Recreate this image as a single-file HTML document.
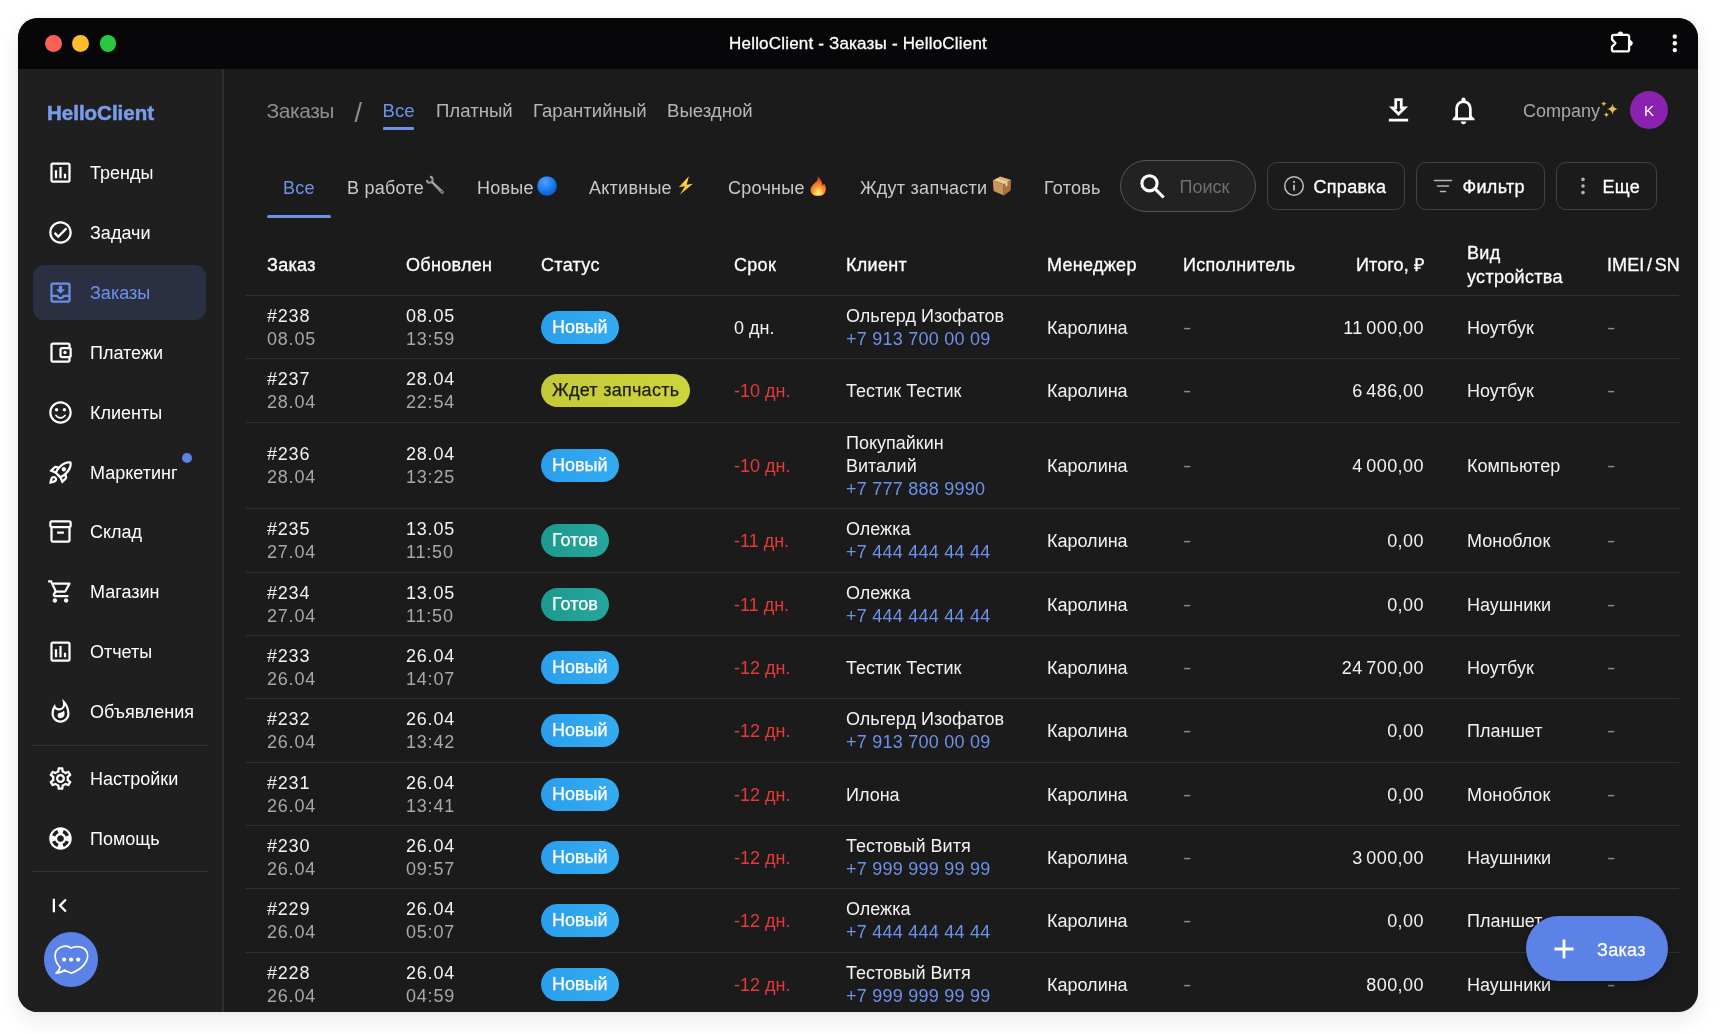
<!DOCTYPE html>
<html lang="ru"><head><meta charset="utf-8"><title>HelloClient - Заказы - HelloClient</title>
<style>
*{box-sizing:border-box;margin:0;padding:0}
html,body{width:1720px;height:1034px;overflow:hidden;background:#fff}
body{font-family:"Liberation Sans",sans-serif;color:#fff;font-size:18px}
.win{position:absolute;left:18px;top:18px;width:1680px;height:994px;border-radius:20px;overflow:hidden;background:#1b1b1b;box-shadow:0 8px 22px rgba(0,0,0,.085),0 0 2px rgba(0,0,0,.09)}
.pg{position:absolute;left:-18px;top:-18px;width:1720px;height:1034px;will-change:transform}
.pg div,.pg i{position:absolute}
svg{display:block}
.titlebar{left:18px;top:18px;width:1680px;height:51px;background:#070709}
.tl{width:16.8px;height:16.8px;border-radius:50%;top:16.9px}
.tl.r{left:27.1px;background:#fe5f57}.tl.y{left:54.2px;background:#febc2e}.tl.g{left:81.5px;background:#28c840}
.ttl{left:0;width:1680px;top:0;height:51px;line-height:51px;text-align:center;font-size:17px;letter-spacing:.19px;color:#fff;-webkit-text-stroke:.3px #fff}
.puzzle{left:1586px;top:9px}.kebab{left:1652px;top:13px}
.sidebar{left:0;top:0;width:1720px;height:1034px}
.sidebar:before{content:"";position:absolute;left:18px;top:69px;width:204px;height:943px;background:#1f1f1f;border-right:2px solid #2e2e2e}
.main{left:0;top:0;width:1720px;height:1034px}
.logo{left:47px;top:99px;font-size:20.5px;font-weight:bold;color:#7b9cea;line-height:28px;letter-spacing:0;-webkit-text-stroke:.5px #7b9cea}
.sbi{left:33px;width:173px;height:54.5px;border-radius:11px;margin-top:-1px}
.sbi.act{background:#2a3041}
.sbi .ic{position:absolute;left:13.6px;top:13.7px;width:27px;height:27px}
.sbi .lb{position:absolute;left:57px;top:0;line-height:56px;font-size:18px;white-space:nowrap}
.sbi.act .lb{color:#6d92ea}
.sbi .dot{left:149px;top:8px;width:10px;height:10px;border-radius:50%;background:#5b82e6}
.sbdiv{left:32px;width:176px;height:1px;background:#333}
.collapse{left:46px;top:891.5px}
.chat{left:43.8px;top:932px;width:54.6px;height:54.6px;border-radius:50%;background:#5b82e6}
.crumb{left:266.500px;top:96px;font-size:21px;line-height:30px;color:#8e8e8e;letter-spacing:-.45px}
.slash{left:354.500px;top:97.500px;font-size:27px;line-height:30px;color:#8e8e8e}
.tnav{top:96px;font-size:18.6px;line-height:30px;color:#b5b5b5;white-space:nowrap}
.tnav.on{color:#6d92ea}
.tnavline{left:382.500px;top:127px;width:31px;height:3px;background:#6d92ea;border-radius:1px}
.dl{left:1382px;top:93.7px}.bell{left:1447.3px;top:93.6px}
.company{left:1523px;top:96px;font-size:18px;line-height:30px;color:#a9a9a9;white-space:nowrap}
.avatar{left:1630px;top:91px;width:38px;height:38px;border-radius:50%;background:#8a22b0;text-align:center;line-height:39px;font-size:15px;color:#fff}
.tabs{left:267px;top:160px;width:833px;height:60px;overflow:hidden}
.tabs .tab{margin-left:-267px;top:12.5px;line-height:30px;font-size:18px;letter-spacing:.25px;color:#c9c9c9;white-space:nowrap}
.tabs .tab.on{color:#6d92ea}
.tabline{left:0;top:55px;width:64px;height:3px;background:#6d92ea;border-radius:1.5px}
.em{display:inline-block;width:20px;height:20px;vertical-align:-2px;margin-left:3px}
.em-wrench{margin-left:1px;vertical-align:-1px}.em-pkg{margin-left:5px}
.search{left:1120px;top:160px;width:136px;height:52px;border-radius:26px;border:1.5px solid #565656;background:#222}
.search span{position:absolute;left:58.5px;top:0;line-height:53px;font-size:18px;color:#6f6f6f}
.search svg{position:absolute;left:14.5px;top:8.5px}
.btn{top:162px;height:48px;border-radius:10px;border:1px solid #414141}
.btn span{position:absolute;left:45.5px;top:0;line-height:48px;font-size:18px;color:#fff;letter-spacing:.3px;-webkit-text-stroke:.3px #fff}
.btn svg{position:absolute;left:14px;top:10.5px}
.thead,.row{left:246px;width:1433px;border-bottom:1px solid #303030}
.thead{top:232px;height:64px;font-size:18px;letter-spacing:.3px;-webkit-text-stroke:.3px #fff}
.thead .c{top:0;height:63px;padding-top:2.6px;display:flex;align-items:center;line-height:24px;color:#fff;white-space:nowrap}
.row .c{top:0;bottom:0;padding-top:1px;display:flex;flex-direction:column;justify-content:center;line-height:23px;white-space:nowrap;color:#f2f2f2}
.row .c div{position:static}
.c1{left:21px}.c2{left:160px}.row .c1,.row .c2{letter-spacing:.8px}.row .c8{letter-spacing:.45px;word-spacing:-2px}.ph{letter-spacing:.25px}.c3{left:295px}.c4{left:488px}.c5{left:600px}.c6{left:801px}.c7{left:937px}
.c8{right:255px;text-align:right;align-items:flex-end}.c9{left:1221px}.c10{left:1361px}
.g{color:#a8a8a8}
.row .dash{color:#8a8a8a}
.row .red{color:#e5393b}
.ph{color:#6d92ea}
.st{display:inline-block;height:33px;line-height:33px;border-radius:17px;padding:0 11px;font-size:18px;color:#fff;-webkit-text-stroke:.25px currentColor}
.st-new{background:linear-gradient(90deg,#2a9eed,#34acf1)}
.st-wait{background:linear-gradient(90deg,#c3ca37,#ced43b);color:#1c1c1c;letter-spacing:.27px}
.st-done{background:linear-gradient(90deg,#1d9a8f,#26a69c)}
.fab{left:1526px;top:916px;width:142px;height:65px;border-radius:33px;background:#5b82e6;box-shadow:0 3px 9px rgba(0,0,0,.28)}
.fab span{position:absolute;left:71px;top:0;line-height:68px;font-size:18px;color:#fff;letter-spacing:.3px;-webkit-text-stroke:.25px #fff}
.fab svg{position:absolute;left:26px;top:21px}
.thead .c10{word-spacing:-2.5px}
.row .c3{padding-top:.3px}
.thead .c8,.thead .c10{letter-spacing:.1px}
.company .em{margin-left:-1.5px;width:18px;height:18px;vertical-align:-1px}
.row .c4,.row .c6,.row .c7,.row .c8,.row .c9,.row .c10,.row .one{padding-top:2.4px}
.row .dash span{display:inline-block;transform:scaleX(1.4);transform-origin:0 50%}

</style></head><body>
<div class="win"><div class="pg">
<div class="titlebar"><i class="tl r"></i><i class="tl y"></i><i class="tl g"></i>
<div class="ttl">HelloClient - Заказы - HelloClient</div>
<div class="puzzle"><svg width="34" height="30" viewBox="1604 27 34 30" fill="none" stroke="#fff" stroke-width="2.300" stroke-linejoin="round" stroke-linecap="round"><path d="M1614 34.900h13.100a2 2 0 0 1 2 2v12.500a2 2 0 0 1-2 2h-13.100a2 2 0 0 1-2-2v-2.600l3.400-3.700-3.400-3.700v-2.500a2 2 0 0 1 2-2z"/><path d="M1617.800 34.500a2.600 2.600 0 0 1 5.200 0zM1629.600 40.400a2.700 2.700 0 0 1 0 5.400z" fill="#fff" stroke-width="1"/></svg></div><div class="kebab"><svg width="10" height="24" viewBox="1670 31 10 24" fill="#fff"><circle cx="1674.800" cy="36.500" r="2.200"/><circle cx="1674.800" cy="43.300" r="2.200"/><circle cx="1674.800" cy="50.100" r="2.200"/></svg></div></div>
<div class="sidebar"><div class="logo">HelloClient</div><div class="sbi" style="top:146px"><span class="ic"><svg width="27" height="27" viewBox="0 0 24 24" fill="#fff"><path d="M9 17H7v-7h2v7zm4 0h-2V7h2v10zm4 0h-2v-4h2v4zm2 2H5V5h14v14zm0-16H5c-1.1 0-2 .9-2 2v14c0 1.1.9 2 2 2h14c1.1 0 2-.9 2-2V5c0-1.1-.9-2-2-2z"/></svg></span><span class="lb">Тренды</span></div><div class="sbi" style="top:206px"><span class="ic"><svg width="27" height="27" viewBox="0 0 24 24" fill="#fff"><path d="M12 2C6.48 2 2 6.48 2 12s4.48 10 10 10 10-4.48 10-10S17.52 2 12 2zm0 18c-4.41 0-8-3.59-8-8s3.59-8 8-8 8 3.59 8 8-3.59 8-8 8zm4.59-12.42L10 14.17l-2.59-2.58L6 13l4 4 8-8z"/></svg></span><span class="lb">Задачи</span></div><div class="sbi act" style="top:266px"><span class="ic"><svg width="27" height="27" viewBox="0 0 24 24" fill="#6c8fe6"><path d="M16 9h-2.55V6h-2.9v3H8l4 4zm3-6H4.99C3.88 3 3 3.9 3 5v14c0 1.1.88 2 1.99 2H19c1.1 0 2-.9 2-2V5c0-1.1-.9-2-2-2zm0 16H5v-3h3.56c.69 1.19 1.97 2 3.45 2s2.75-.81 3.45-2H19v3zm0-5h-4.99c0 1.1-.9 2-2 2s-2-.9-2-2H5l-.01-9H19v9z"/></svg></span><span class="lb">Заказы</span></div><div class="sbi" style="top:326px"><span class="ic"><svg width="27" height="27" viewBox="0 0 24 24" fill="#fff"><path d="M21 7.28V5c0-1.1-.9-2-2-2H5c-1.11 0-2 .9-2 2v14c0 1.1.89 2 2 2h14c1.1 0 2-.9 2-2v-2.28c.59-.35 1-.98 1-1.72V9c0-.74-.41-1.37-1-1.720zM20 9v6h-7V9h7zM5 19V5h14v2h-6c-1.1 0-2 .9-2 2v6c0 1.1.9 2 2 2h6v2H5z"/><circle cx="16" cy="12" r="1.5"/></svg></span><span class="lb">Платежи</span></div><div class="sbi" style="top:386px"><span class="ic"><svg width="27" height="27" viewBox="0 0 24 24" fill="#fff"><path d="M12 2C6.480 2 2 6.480 2 12s4.480 10 10 10 10-4.480 10-10S17.520 2 12 2zm0 18c-4.420 0-8-3.580-8-8s3.580-8 8-8 8 3.580 8 8-3.580 8-8 8z"/><path d="M12 16c-1.48 0-2.75-.81-3.45-2H6.880c.8 2.050 2.790 3.500 5.120 3.500s4.320-1.450 5.120-3.500h-1.670c-.7 1.190-1.970 2-3.450 2z"/><circle cx="8.5" cy="9.500" r="1.500"/><circle cx="15.500" cy="9.500" r="1.500"/></svg></span><span class="lb">Клиенты</span></div><div class="sbi" style="top:446px"><span class="ic"><svg width="27" height="27" viewBox="0 0 24 24" fill="#fff"><path d="M6 15c-.83 0-1.58.34-2.12.88C2.700 17.060 2 22 2 22s4.940-.7 6.120-1.880C8.660 19.580 9 18.830 9 18c0-1.660-1.340-3-3-3zm.710 3.710c-.28.28-2.170.76-2.170.76s.47-1.880.76-2.170c.17-.19.42-.3.7-.3.55 0 1 .45 1 1 0 .28-.11.53-.29.71zm10.710-5.060c6.360-6.360 4.240-11.310 4.240-11.310S16.710.22 10.350 6.580l-2.490-.5c-.65-.13-1.330.08-1.810.55L2 10.690l5 2.140L11.170 17l2.140 5 4.050-4.050c.47-.47.68-1.150.55-1.810l-.49-2.490zM7.410 10.830l-1.910-.82 1.970-1.970 1.440.29c-.57.83-1.080 1.700-1.500 2.500zm6.580 7.670l-.82-1.910c.8-.42 1.670-.93 2.490-1.500l.29 1.440-1.960 1.970zM16 12.240c-1.320 1.320-3.380 2.400-4.040 2.730l-2.930-2.930c.32-.65 1.400-2.710 2.730-4.040 4.680-4.680 8.230-3.990 8.230-3.990s.69 3.550-3.990 8.230zM15 11c1.100 0 2-.9 2-2s-.9-2-2-2-2 .9-2 2 .9 2 2 2z"/></svg></span><span class="lb">Маркетинг</span><i class="dot"></i></div><div class="sbi" style="top:505px"><span class="ic"><svg width="27" height="27" viewBox="0 0 24 24" fill="#fff"><path d="M20 2H4c-1 0-2 .9-2 2v3.010c0 .72.43 1.340 1 1.690V20c0 1.100 1.100 2 2 2h14c.9 0 2-.9 2-2V8.700c.57-.35 1-.97 1-1.690V4c0-1.100-1-2-2-2zm-1 18H5V9h14v11zm1-13H4V4h16v3zM9 12h6v2H9z"/></svg></span><span class="lb">Склад</span></div><div class="sbi" style="top:565px"><span class="ic"><svg width="27" height="27" viewBox="0 0 24 24" fill="#fff"><path d="M15.55 13c.75 0 1.410-.41 1.750-1.030l3.580-6.490c.37-.66-.11-1.480-.87-1.480H5.210l-.94-2H1v2h2l3.600 7.590-1.350 2.440C4.520 15.370 5.480 17 7 17h12v-2H7l1.100-2h7.450zM6.160 6h12.150l-2.760 5H8.530L6.160 6zM7 18c-1.100 0-1.990.9-1.990 2S5.900 22 7 22s2-.9 2-2-.9-2-2-2zm10 0c-1.100 0-1.990.9-1.990 2s.89 2 1.990 2 2-.9 2-2-.9-2-2-2z"/></svg></span><span class="lb">Магазин</span></div><div class="sbi" style="top:625px"><span class="ic"><svg width="27" height="27" viewBox="0 0 24 24" fill="#fff"><path d="M9 17H7v-7h2v7zm4 0h-2V7h2v10zm4 0h-2v-4h2v4zm2 2H5V5h14v14zm0-16H5c-1.1 0-2 .9-2 2v14c0 1.1.9 2 2 2h14c1.1 0 2-.9 2-2V5c0-1.1-.9-2-2-2z"/></svg></span><span class="lb">Отчеты</span></div><div class="sbi" style="top:685px"><span class="ic"><svg width="27" height="27" viewBox="0 0 24 24" fill="#fff"><path d="M11.57 13.160c-1.360.28-2.170 1.160-2.170 2.410 0 1.340 1.110 2.420 2.490 2.420 2.050 0 3.710-1.660 3.710-3.710 0-1.070-.15-2.120-.46-3.120-.79 1.070-2.200 1.720-3.570 2zM13.500.67s.74 2.650.74 4.800c0 2.060-1.350 3.730-3.410 3.730-2.070 0-3.630-1.670-3.630-3.730l.03-.36C5.210 7.510 4 10.620 4 14c0 4.420 3.580 8 8 8s8-3.580 8-8C20 8.610 17.410 3.800 13.500.67zM12 20c-3.310 0-6-2.690-6-6 0-1.530.3-3.040.86-4.430 1.010 1.010 2.410 1.630 3.970 1.630 2.660 0 4.750-1.830 5.280-4.430C17.340 8.970 18 11.440 18 14c0 3.310-2.690 6-6 6z"/></svg></span><span class="lb">Объявления</span></div><div class="sbdiv" style="top:745px"></div><div class="sbi" style="top:752px"><span class="ic"><svg width="27" height="27" viewBox="0 0 24 24" fill="#fff"><path d="M19.43 12.980c.04-.32.07-.64.07-.98 0-.34-.03-.66-.07-.98l2.110-1.650c.19-.15.24-.42.12-.64l-2-3.460c-.09-.16-.26-.25-.44-.25-.06 0-.12.01-.17.03l-2.490 1c-.52-.4-1.080-.73-1.690-.98l-.38-2.650C14.460 2.180 14.250 2 14 2h-4c-.25 0-.46.18-.49.42l-.38 2.650c-.61.25-1.170.59-1.690.98l-2.490-1c-.06-.02-.12-.03-.18-.03-.17 0-.34.09-.43.25l-2 3.460c-.13.22-.07.49.12.64l2.110 1.650c-.04.32-.07.65-.07.98 0 .33.03.66.07.98l-2.110 1.650c-.19.15-.24.42-.12.64l2 3.460c.09.16.26.25.44.25.06 0 .12-.01.17-.03l2.490-1c.52.4 1.080.73 1.690.98l.38 2.650c.03.24.24.42.49.42h4c.25 0 .46-.18.49-.42l.38-2.650c.61-.25 1.170-.59 1.690-.98l2.490 1c.06.02.12.03.18.03.17 0 .34-.09.43-.25l2-3.460c.12-.22.07-.49-.12-.64l-2.110-1.650zm-1.980-1.710c.04.31.05.52.05.73 0 .21-.02.43-.05.73l-.14 1.130.89.7 1.080.84-.7 1.210-1.270-.51-1.040-.42-.9.68c-.43.32-.84.56-1.250.73l-1.060.43-.16 1.130-.2 1.350h-1.400l-.19-1.350-.16-1.130-1.060-.43c-.43-.18-.83-.41-1.230-.71l-.91-.7-1.060.43-1.270.51-.7-1.210 1.080-.84.89-.7-.14-1.130c-.03-.31-.05-.54-.05-.74s.02-.43.05-.73l.14-1.130-.89-.7-1.080-.84.7-1.210 1.270.51 1.040.42.9-.68c.43-.32.84-.56 1.250-.73l1.060-.43.16-1.130.2-1.350h1.390l.19 1.350.16 1.130 1.060.43c.43.18.83.41 1.230.71l.91.7 1.060-.43 1.270-.51.7 1.210-1.070.85-.89.7.14 1.130zM12 8c-2.210 0-4 1.790-4 4s1.790 4 4 4 4-1.790 4-4-1.790-4-4-4zm0 6c-1.100 0-2-.9-2-2s.9-2 2-2 2 .9 2 2-.9 2-2 2z"/></svg></span><span class="lb">Настройки</span></div><div class="sbi" style="top:812px"><span class="ic"><svg width="27" height="27" viewBox="0 0 24 24" fill="#fff"><path d="M12 2C6.48 2 2 6.48 2 12s4.48 10 10 10 10-4.48 10-10S17.52 2 12 2zm7.460 7.120l-2.780 1.150c-.51-1.360-1.580-2.440-2.950-2.940l1.150-2.780c2.100.8 3.770 2.470 4.580 4.570zM12 15c-1.660 0-3-1.340-3-3s1.340-3 3-3 3 1.340 3 3-1.340 3-3 3zM9.130 4.540l1.170 2.780c-1.380.5-2.470 1.590-2.980 2.970L4.540 9.130c.81-2.110 2.480-3.780 4.590-4.590zM4.540 14.870l2.780-1.150c.51 1.380 1.590 2.460 2.970 2.960l-1.170 2.780c-2.100-.81-3.770-2.480-4.580-4.590zm10.340 4.590l-1.150-2.780c1.370-.51 2.450-1.590 2.950-2.970l2.780 1.170c-.81 2.100-2.480 3.770-4.580 4.580z"/></svg></span><span class="lb">Помощь</span></div><div class="sbdiv" style="top:871px"></div><div class="collapse"><svg width="27" height="27" viewBox="0 0 24 24" fill="#fff"><path d="M18.410 16.590L13.820 12l4.590-4.590L17 6l-6 6 6 6zM6 6h2v12H6z"/></svg></div><div class="chat"><svg width="55" height="55" viewBox="43.800 931.500 55 55" fill="none" stroke="#fff" stroke-width="1.700" stroke-linejoin="round" stroke-linecap="round"><path d="M71 947.600C68.500 945.600 64 945.300 60.500 946.800C56.500 948.600 54.600 952.500 55 956.500C55.300 960.500 57.200 964 60 966.800C59.400 969.200 58 971.200 55.800 972.600C59 972.600 62 971.400 64.200 969.500C66.300 970.800 68.700 971.900 71.200 972.600C77 970.500 83 966.500 86 961C88.300 956.500 87.800 951.500 84.500 948.500C81 945.500 74.500 945.300 71 947.600Z"/><circle cx="63.900" cy="959.100" r="2.100" fill="#fff" stroke="none"/><circle cx="70.900" cy="959.100" r="2.100" fill="#fff" stroke="none"/><circle cx="78" cy="959.100" r="2.100" fill="#fff" stroke="none"/></svg></div></div>
<div class="main">
<div class="crumb">Заказы</div><div class="slash">/</div>
<div class="tnav on" style="left:382.500px">Все</div><div class="tnavline"></div>
<div class="tnav" style="left:436px">Платный</div>
<div class="tnav" style="left:533px">Гарантийный</div>
<div class="tnav" style="left:667px">Выездной</div>
<div class="dl"><svg width="33" height="33" viewBox="0 0 24 24" fill="#fff"><path d="M19 9h-4V3H9v6H5l7 7 7-7zm-8 2V5h2v6h1.170L12 13.170 9.830 11H11zm-6 7h14v2H5z"/></svg></div><div class="bell"><svg width="33" height="33" viewBox="0 0 24 24" fill="#fff"><path d="M12 22c1.100 0 2-.9 2-2h-4c0 1.100.9 2 2 2zm6-6v-5c0-3.070-1.630-5.640-4.500-6.320V4c0-.83-.67-1.500-1.500-1.500s-1.500.67-1.500 1.500v.68C7.640 5.360 6 7.920 6 11v5l-2 2v1h16v-1l-2-2zm-2 1H8v-6c0-2.480 1.510-4.500 4-4.500s4 2.020 4 4.500v6z"/></svg></div>
<div class="company">Company<span class="em em-sparkle"><svg width="20" height="20" viewBox="0 0 20 20" fill="#e6bf4c"><path d="M13.500 3.200c.4 3.400 1.800 5.200 5.600 5.800-3.800.6-5.200 2.400-5.600 6.200-.4-3.800-1.800-5.600-5.600-6.200 3.800-.6 5.200-2.400 5.600-5.800z"/><path d="M4.800.8c.2 1.800.9 2.600 2.800 2.900-1.900.3-2.600 1.200-2.800 3-.2-1.800-.9-2.700-2.800-3 1.900-.3 2.600-1.100 2.800-2.900z"/><path d="M7.400 11.800c.2 1.800.9 2.600 2.800 2.900-1.900.3-2.600 1.200-2.800 3-.2-1.800-.9-2.700-2.800-3 1.900-.3 2.600-1.100 2.800-2.900z"/></svg></span></div><div class="avatar">K</div>

<div class="tabs">
<div class="tab on" style="left:283px">Все</div><div class="tabline"></div>
<div class="tab" style="left:347px">В работе<span class="em em-wrench"><svg width="20" height="20" viewBox="0 0 20 20"><defs><linearGradient id="wg" x1="0" y1="0" x2="1" y2="1"><stop offset="0" stop-color="#b9b9b9"/><stop offset="1" stop-color="#7d7d7d"/></linearGradient></defs><path d="M5.050 1.910A2.900 2.900 0 1 1 1.910 5.050" fill="none" stroke="url(#wg)" stroke-width="2.100"/><path d="M7.300 5.900L18.600 16.100a1.800 1.800 0 0 1-2.500 2.500L5.900 7.300z" fill="url(#wg)"/><circle cx="16.700" cy="16.700" r=".8" fill="#2a2a2a"/></svg></span></div>
<div class="tab" style="left:477px">Новые<span class="em em-blue"><svg width="20" height="20" viewBox="0 0 20 20"><defs><radialGradient id="bg" cx=".4" cy=".3" r=".8"><stop offset="0" stop-color="#4ea3ff"/><stop offset=".6" stop-color="#1673ee"/><stop offset="1" stop-color="#0b55c8"/></radialGradient></defs><circle cx="10" cy="10" r="9.800" fill="url(#bg)"/></svg></span></div>
<div class="tab" style="left:589px">Активные<span class="em em-zap"><svg width="20" height="20" viewBox="0 0 20 20"><defs><linearGradient id="zg" x1="1" y1="0" x2="0" y2="1"><stop offset="0" stop-color="#ffe45c"/><stop offset=".55" stop-color="#f9c93c"/><stop offset="1" stop-color="#e8912a"/></linearGradient></defs><path d="M13.900.200L3.700 11.200l6.300-1L4.600 19.100 17.900 7.700l-6.300 1z" fill="url(#zg)"/></svg></span></div>
<div class="tab" style="left:728px">Срочные<span class="em em-fire"><svg width="20" height="20" viewBox="0 0 20 20"><defs><radialGradient id="fg" cx=".5" cy=".88" r=".8"><stop offset="0" stop-color="#fff58a"/><stop offset=".22" stop-color="#ffd24a"/><stop offset=".5" stop-color="#fb8b2d"/><stop offset=".8" stop-color="#ee5a2b"/><stop offset="1" stop-color="#d63c25"/></radialGradient></defs><path d="M9.300.400c.9 2.400.2 4.100-1.400 5.600C6 7.800 4 9.100 3 11.600c-1.300 3.300.3 7.300 4.300 8.100h5.600c3.300-.9 5.300-4 5-7.500-.2-1.800-1-3.500-2.100-4.900-.1 1-.4 1.800-1.200 2.400C13.900 5.500 12.500 2 9.300.400z" fill="url(#fg)"/></svg></span></div>
<div class="tab" style="left:860px">Ждут запчасти<span class="em em-pkg"><svg width="20" height="20" viewBox="0 0 20 20"><path d="M.8 4.600L8.200.5l11 3.400-7.500 4.500z" fill="#e0b47a"/><path d="M.8 4.600l10.900 3.800v11.100L1.600 15.100z" fill="#c89559"/><path d="M11.700 8.400l7.500-4.500-.6 10.700-6.900 4.900z" fill="#a8733e"/><path d="M4.300 2.700l11.100 3.500v3.300l-1.800 1.100V7.300L2.700 3.600z" fill="#f0d9b0"/></svg></span></div>
<div class="tab" style="left:1044px">Готовь</div>
</div>
<div class="search"><svg width="32" height="32" viewBox="1136 170 32 32" fill="none" stroke="#fff" stroke-width="3.100" stroke-linecap="butt"><circle cx="1149.500" cy="183.300" r="7.600"/><path d="M1154.800 188.600l8.900 8.900"/></svg><span>Поиск</span></div>
<div class="btn" style="left:1267px;width:138px"><svg width="24" height="24" viewBox="0 0 24 24" fill="none" stroke="#bdbdbd" stroke-width="1.500"><circle cx="12" cy="12" r="9.300"/><path d="M12 10.800v5.600" stroke-width="1.800"/><circle cx="12" cy="7.900" r="1.100" fill="#bdbdbd" stroke="none"/></svg><span>Справка</span></div>
<div class="btn" style="left:1416px;width:129px"><svg width="24" height="24" viewBox="0 0 24 24" fill="none" stroke="#b5b5b5" stroke-width="1.600" stroke-linecap="round"><path d="M3.500 6.500h17M6.500 12h11M9.500 17.500h5"/></svg><span>Фильтр</span></div>
<div class="btn" style="left:1556px;width:101px"><svg width="24" height="24" viewBox="0 0 24 24" fill="#b5b5b5"><circle cx="12" cy="5.400" r="1.800"/><circle cx="12" cy="12" r="1.800"/><circle cx="12" cy="18.600" r="1.800"/></svg><span>Еще</span></div>
<div class="thead"><div class="c c1">Заказ</div><div class="c c2">Обновлен</div><div class="c c3">Статус</div><div class="c c4">Срок</div><div class="c c5">Клиент</div><div class="c c6">Менеджер</div><div class="c c7">Исполнитель</div><div class="c c8">Итого, ₽</div><div class="c c9">Вид<br>устройства</div><div class="c c10">IMEI / SN</div></div>
<div class="row" style="top:296px;height:63px"><div class="c c1"><div>#238</div><div class="g">08.05</div></div><div class="c c2"><div>08.05</div><div class="g">13:59</div></div><div class="c c3"><span class="st st-new">Новый</span></div><div class="c c4 term">0 дн.</div><div class="c c5"><div>Ольгерд Изофатов</div><div class="ph">+7 913 700 00 09</div></div><div class="c c6">Каролина</div><div class="c c7 dash"><span>-</span></div><div class="c c8">11 000,00</div><div class="c c9">Ноутбук</div><div class="c c10 dash"><span>-</span></div></div><div class="row" style="top:359px;height:64px"><div class="c c1"><div>#237</div><div class="g">28.04</div></div><div class="c c2"><div>28.04</div><div class="g">22:54</div></div><div class="c c3"><span class="st st-wait">Ждет запчасть</span></div><div class="c c4 term red">-10 дн.</div><div class="c c5 one"><div>Тестик Тестик</div></div><div class="c c6">Каролина</div><div class="c c7 dash"><span>-</span></div><div class="c c8">6 486,00</div><div class="c c9">Ноутбук</div><div class="c c10 dash"><span>-</span></div></div><div class="row" style="top:423px;height:86px"><div class="c c1"><div>#236</div><div class="g">28.04</div></div><div class="c c2"><div>28.04</div><div class="g">13:25</div></div><div class="c c3"><span class="st st-new">Новый</span></div><div class="c c4 term red">-10 дн.</div><div class="c c5"><div>Покупайкин</div><div>Виталий</div><div class="ph">+7 777 888 9990</div></div><div class="c c6">Каролина</div><div class="c c7 dash"><span>-</span></div><div class="c c8">4 000,00</div><div class="c c9">Компьютер</div><div class="c c10 dash"><span>-</span></div></div><div class="row" style="top:509px;height:64px"><div class="c c1"><div>#235</div><div class="g">27.04</div></div><div class="c c2"><div>13.05</div><div class="g">11:50</div></div><div class="c c3"><span class="st st-done">Готов</span></div><div class="c c4 term red">-11 дн.</div><div class="c c5"><div>Олежка</div><div class="ph">+7 444 444 44 44</div></div><div class="c c6">Каролина</div><div class="c c7 dash"><span>-</span></div><div class="c c8">0,00</div><div class="c c9">Моноблок</div><div class="c c10 dash"><span>-</span></div></div><div class="row" style="top:573px;height:63px"><div class="c c1"><div>#234</div><div class="g">27.04</div></div><div class="c c2"><div>13.05</div><div class="g">11:50</div></div><div class="c c3"><span class="st st-done">Готов</span></div><div class="c c4 term red">-11 дн.</div><div class="c c5"><div>Олежка</div><div class="ph">+7 444 444 44 44</div></div><div class="c c6">Каролина</div><div class="c c7 dash"><span>-</span></div><div class="c c8">0,00</div><div class="c c9">Наушники</div><div class="c c10 dash"><span>-</span></div></div><div class="row" style="top:636px;height:63px"><div class="c c1"><div>#233</div><div class="g">26.04</div></div><div class="c c2"><div>26.04</div><div class="g">14:07</div></div><div class="c c3"><span class="st st-new">Новый</span></div><div class="c c4 term red">-12 дн.</div><div class="c c5 one"><div>Тестик Тестик</div></div><div class="c c6">Каролина</div><div class="c c7 dash"><span>-</span></div><div class="c c8">24 700,00</div><div class="c c9">Ноутбук</div><div class="c c10 dash"><span>-</span></div></div><div class="row" style="top:699px;height:64px"><div class="c c1"><div>#232</div><div class="g">26.04</div></div><div class="c c2"><div>26.04</div><div class="g">13:42</div></div><div class="c c3"><span class="st st-new">Новый</span></div><div class="c c4 term red">-12 дн.</div><div class="c c5"><div>Ольгерд Изофатов</div><div class="ph">+7 913 700 00 09</div></div><div class="c c6">Каролина</div><div class="c c7 dash"><span>-</span></div><div class="c c8">0,00</div><div class="c c9">Планшет</div><div class="c c10 dash"><span>-</span></div></div><div class="row" style="top:763px;height:63px"><div class="c c1"><div>#231</div><div class="g">26.04</div></div><div class="c c2"><div>26.04</div><div class="g">13:41</div></div><div class="c c3"><span class="st st-new">Новый</span></div><div class="c c4 term red">-12 дн.</div><div class="c c5 one"><div>Илона</div></div><div class="c c6">Каролина</div><div class="c c7 dash"><span>-</span></div><div class="c c8">0,00</div><div class="c c9">Моноблок</div><div class="c c10 dash"><span>-</span></div></div><div class="row" style="top:826px;height:63px"><div class="c c1"><div>#230</div><div class="g">26.04</div></div><div class="c c2"><div>26.04</div><div class="g">09:57</div></div><div class="c c3"><span class="st st-new">Новый</span></div><div class="c c4 term red">-12 дн.</div><div class="c c5"><div>Тестовый Витя</div><div class="ph">+7 999 999 99 99</div></div><div class="c c6">Каролина</div><div class="c c7 dash"><span>-</span></div><div class="c c8">3 000,00</div><div class="c c9">Наушники</div><div class="c c10 dash"><span>-</span></div></div><div class="row" style="top:889px;height:64px"><div class="c c1"><div>#229</div><div class="g">26.04</div></div><div class="c c2"><div>26.04</div><div class="g">05:07</div></div><div class="c c3"><span class="st st-new">Новый</span></div><div class="c c4 term red">-12 дн.</div><div class="c c5"><div>Олежка</div><div class="ph">+7 444 444 44 44</div></div><div class="c c6">Каролина</div><div class="c c7 dash"><span>-</span></div><div class="c c8">0,00</div><div class="c c9">Планшет</div><div class="c c10 dash"><span>-</span></div></div><div class="row" style="top:953px;height:64px"><div class="c c1"><div>#228</div><div class="g">26.04</div></div><div class="c c2"><div>26.04</div><div class="g">04:59</div></div><div class="c c3"><span class="st st-new">Новый</span></div><div class="c c4 term red">-12 дн.</div><div class="c c5"><div>Тестовый Витя</div><div class="ph">+7 999 999 99 99</div></div><div class="c c6">Каролина</div><div class="c c7 dash"><span>-</span></div><div class="c c8">800,00</div><div class="c c9">Наушники</div><div class="c c10 dash"><span>-</span></div></div>
<div class="fab"><svg width="24" height="24" viewBox="0 0 24 24" fill="none" stroke="#fff" stroke-width="2.800"><path d="M12 2.500v19M2.500 12h19"/></svg><span>Заказ</span></div>
</div>
</div></div>
</body></html>
